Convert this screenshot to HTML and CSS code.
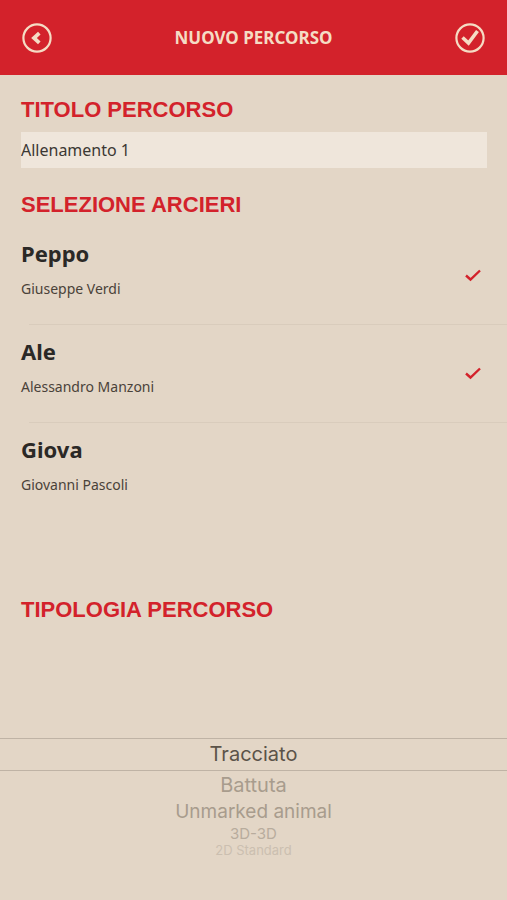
FILE: index.html
```html
<!DOCTYPE html>
<html lang="it">
<head>
<meta charset="utf-8">
<meta name="viewport" content="width=device-width, initial-scale=1">
<title>Nuovo percorso</title>
<link rel="stylesheet" href="styles.css">
</head>
<body>
<header class="bar">
  <button class="bar-button" type="button" aria-label="Indietro">
    <svg viewBox="0 0 30 30" aria-hidden="true"><circle cx="15" cy="15" r="13.6" stroke-width="2.2"/><path d="M17.3 10.2 12 15l5.3 4.8" stroke-width="3.8"/></svg>
  </button>
  <h1 class="bar-title">NUOVO PERCORSO</h1>
  <button class="bar-button" type="submit" form="route" aria-label="Conferma">
    <svg viewBox="0 0 30 30" aria-hidden="true"><circle cx="15" cy="15" r="13.6" stroke-width="2.2"/><path d="M7.5 14.5l6 5.5 9-12" stroke-width="3.6"/></svg>
  </button>
</header>
<form id="route" class="route">
  <section class="title-section">
    <h2 class="heading"><label for="name">TITOLO PERCORSO</label></h2>
    <input id="name" class="text-box" type="text" value="Allenamento 1">
  </section>
  <section class="archers">
    <h2 class="heading">SELEZIONE ARCIERI</h2>
    <label class="archer">
      <span class="person"><span class="nick">Peppo</span><span class="full-name">Giuseppe Verdi</span></span>
      <input class="hidden-input" type="checkbox" checked>
      <svg class="tick" viewBox="0 0 16 14" aria-hidden="true"><path d="M1 7.5l4.500 4 9.5-9"/></svg>
    </label>
    <label class="archer">
      <span class="person"><span class="nick">Ale</span><span class="full-name">Alessandro Manzoni</span></span>
      <input class="hidden-input" type="checkbox" checked>
      <svg class="tick" viewBox="0 0 16 14" aria-hidden="true"><path d="M1 7.5l4.500 4 9.5-9"/></svg>
    </label>
    <label class="archer">
      <span class="person"><span class="nick">Giova</span><span class="full-name">Giovanni Pascoli</span></span>
      <input class="hidden-input" type="checkbox">
      <svg class="tick" viewBox="0 0 16 14" aria-hidden="true"><path d="M1 7.5l4.500 4 9.5-9"/></svg>
    </label>
  </section>
  <section class="type-section">
    <h2 class="heading">TIPOLOGIA PERCORSO</h2>
    <div class="wheel" role="radiogroup" aria-label="Tipologia percorso">
      <label class="option selected"><input class="hidden-input" type="radio" name="type" checked>Tracciato</label>
      <label class="option near"><input class="hidden-input" type="radio" name="type">Battuta</label>
      <label class="option middle"><input class="hidden-input" type="radio" name="type">Unmarked animal</label>
      <label class="option far"><input class="hidden-input" type="radio" name="type">3D-3D</label>
      <label class="option last"><input class="hidden-input" type="radio" name="type">2D Standard</label>
    </div>
  </section>
</form>
</body>
</html>
```
FILE: styles.css
```css
* { box-sizing: border-box; }

body {
  margin: 0;
  min-height: 100vh;
  background: #e3d6c6;
  color: #2b2926;
  font-family: "Noto Sans", sans-serif;
}

.bar {
  display: flex;
  align-items: center;
  justify-content: space-between;
  height: 75px;
  padding: 0 22px;
  background: #d3222b;
  color: #f5dcc4;
}

.bar-button {
  width: 30px;
  height: 30px;
  padding: 0;
  border: 0;
  background: none;
  color: inherit;
}

.bar-button svg {
  display: block;
  fill: none;
  stroke: currentColor;
}

.bar-title {
  margin: 0;
  font-size: 17px;
  font-weight: 700;
}

.title-section { padding: 21px 20px 0 21px; }

.heading {
  margin: 0;
  color: #d3222b;
  font: bold 22px/28px "Liberation Sans", sans-serif;
}

.text-box {
  display: block;
  width: 100%;
  height: 36px;
  margin-top: 8px;
  padding: 0;
  border: 0;
  border-radius: 0;
  background: #efe6db;
  color: #3b3833;
  font: 16px/36px "Noto Sans", sans-serif;
}

.archers { padding: 23px 0 0 21px; }

.archer {
  position: relative;
  display: flex;
  align-items: center;
  justify-content: space-between;
  height: 98px;
  padding-right: 26px;
}

.archer + .archer::before {
  content: "";
  position: absolute;
  top: 0;
  left: 8px;
  right: 0;
  border-top: 1px solid #d9ccbc;
}

.archers .heading { margin-bottom: 7px; }

.person {
  display: flex;
  flex-direction: column;
  gap: 12px;
  padding-bottom: 12px;
}

.nick {
  font-size: 22px;
  line-height: 28px;
  font-weight: 700;
}

.full-name {
  color: #4a4239;
  font-size: 14px;
  line-height: 20px;
}

.hidden-input {
  position: absolute;
  opacity: 0;
  pointer-events: none;
}

.tick {
  visibility: hidden;
  width: 16px;
  height: 14px;
  fill: none;
  stroke: #d3222b;
  stroke-width: 2.4;
}

.hidden-input:checked + .tick { visibility: visible; }

.type-section { padding-top: 76px; }

.type-section .heading { padding-left: 21px; }

.wheel {
  display: flex;
  flex-direction: column;
  margin-top: 114px;
  font-family: Inter, sans-serif;
  text-align: center;
}

.option { color: #a89c8d; }

.selected {
  border-top: 1px solid #bfb3a5;
  border-bottom: 1px solid #bfb3a5;
  color: #5b5349;
  font-size: 20px;
  line-height: 31px;
}

.near {
  font-size: 20px;
  line-height: 28px;
}

.middle {
  font-size: 19px;
  line-height: 26px;
}

.far {
  color: #b8ac9d;
  font-size: 15px;
  line-height: 17px;
}

.last {
  color: #cbbfb0;
  font-size: 13px;
  line-height: 16px;
}
```
